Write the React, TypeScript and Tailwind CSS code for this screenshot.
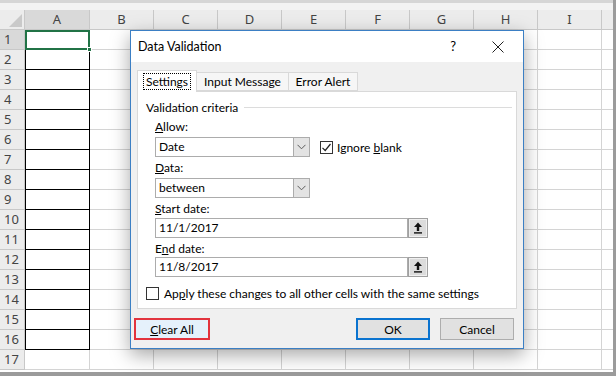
import React from 'react'

const COLS = ['A', 'B', 'C', 'D', 'E', 'F', 'G', 'H', 'I']
const ROWS = Array.from({ length: 17 }, (_, i) => i + 1)

const dlgFont = { fontFamily: 'Lato, "Noto Sans", "Liberation Sans", sans-serif' }

function Chevron() {
  return (
    <svg width="9" height="6" viewBox="0 0 9 6" className="block">
      <path d="M0.5 0.8 L4.5 4.8 L8.5 0.8" fill="none" stroke="#5a5a5a" strokeWidth="1" />
    </svg>
  )
}

function RefIcon() {
  return (
    <svg width="10" height="12" viewBox="0 0 10 12" className="block">
      <path d="M5 0.5 L9 5 L6.2 5 L6.2 9 L3.8 9 L3.8 5 L1 5 Z" fill="#111" />
      <rect x="1" y="10.2" width="8" height="1.4" fill="#111" />
    </svg>
  )
}

function CheckBox({ checked }: { checked?: boolean }) {
  return (
    <span className="flex h-[13px] w-[13px] items-center justify-center border border-[#333] bg-white">
      {checked && (
        <svg width="11" height="11" viewBox="0 0 11 11">
          <path d="M1.5 5.8 L4.2 8.5 L9.5 2" fill="none" stroke="#222" strokeWidth="1.2" />
        </svg>
      )}
    </span>
  )
}

function Select({ value }: { value: string }) {
  return (
    <div className="flex h-[20px] w-[155px] border border-[#acacac] bg-white">
      <span className="flex-1 pl-[3px] leading-[18px]">{value}</span>
      <span className="flex w-[16px] items-center justify-center border-l border-[#acacac] bg-[#e3e3e3]">
        <Chevron />
      </span>
    </div>
  )
}

function RefInput({ value }: { value: string }) {
  return (
    <div className="flex h-[20px] w-[273px]">
      <span className="flex-1 border border-[#acacac] bg-white pl-[3px] leading-[18px]">{value}</span>
      <span className="flex w-[20px] items-center justify-center border border-[#a0a0a0] bg-[#dcdcdc] shadow-[inset_0_0_0_1px_#f0f0f0]">
        <RefIcon />
      </span>
    </div>
  )
}

function Label({ children }: { children: React.ReactNode }) {
  return <div className="mt-[2px] h-[17px] leading-[17px]">{children}</div>
}

function Sheet() {
  return (
    <div className="h-[372px] w-[613px] bg-white" style={{ fontFamily: '"Noto Sans", "Liberation Sans", sans-serif' }}>
      <div className="h-[10px] border-t-[3px] border-[#d6d6d6] bg-[#f3f3f3]" />
      <div className="grid grid-cols-[25px_65px_repeat(8,64px)_1fr] grid-rows-[20px_repeat(17,20px)] text-[13px] text-[#444]">
        <div className="flex items-end justify-end border-r border-b border-[#c8c8c8] bg-[#ececec] pr-[2px] pb-[2px]">
          <svg width="13" height="13" viewBox="0 0 13 13">
            <path d="M13 0 L13 13 L0 13 Z" fill="#c9c9c9" />
          </svg>
        </div>
        {COLS.map((c) => (
          <div
            key={c}
            className={`flex items-center justify-center border-r border-b border-[#c8c8c8] ${c === 'A' ? 'bg-[#d9d9d9]' : 'bg-[#ececec]'}`}
          >
            {c}
          </div>
        ))}
        <div className="border-b border-[#c8c8c8] bg-[#ececec]" />
        {ROWS.map((r) => (
          <React.Fragment key={r}>
            <div
              className={`flex items-center pl-[4px] border-r border-b border-[#c8c8c8] ${r === 1 ? 'bg-[#d9d9d9]' : 'bg-[#ececec]'}`}
            >
              {r}
            </div>
            {r === 1 ? (
              <div className="relative border-2 border-[#217346]">
                <span className="absolute -right-[4px] -bottom-[4px] h-[5px] w-[5px] border border-white bg-[#217346]" />
              </div>
            ) : r <= 16 ? (
              <div className="border-x border-b border-black" />
            ) : (
              <div className="border-r border-b border-[#d4d4d4]" />
            )}
            {COLS.slice(1).map((c) => (
              <div key={c} className="border-r border-b border-[#d4d4d4]" />
            ))}
            <div className="border-b border-[#d4d4d4]" />
          </React.Fragment>
        ))}
      </div>
    </div>
  )
}

function Dialog() {
  return (
    <div
      className="absolute left-[130px] top-[30px] flex h-[319px] w-[394px] flex-col border border-[#3b7fc4] bg-[#f0f0f0] text-[12px] leading-[17px] text-black shadow-[0_6px_18px_rgba(0,0,0,0.35)]"
      style={dlgFont}
    >
      {/* Title bar */}
      <div className="flex h-[31px] items-center bg-white pl-[7px]">
        <span className="flex-1 text-[12.5px]">Data Validation</span>
        <span className="mr-[36px] text-[13px]">?</span>
        <svg width="12" height="12" viewBox="0 0 12 12" className="mr-[19px]">
          <path d="M0.5 0.5 L11.5 11.5 M11.5 0.5 L0.5 11.5" stroke="#222" strokeWidth="1" />
        </svg>
      </div>

      {/* Tabs */}
      <div className="mt-[8px] flex h-[21px] items-end pl-[6px]">
        <div className="relative z-10 -mb-px flex h-[22px] w-[60px] items-center justify-center border border-b-0 border-[#d9d9d9] bg-white">
          <span className="border border-dotted border-black px-[2px] leading-[15px]">Settings</span>
        </div>
        <div className="flex h-[19px] w-[92px] items-center justify-center border border-l-0 border-[#d9d9d9] bg-[#f6f6f6]">
          Input Message
        </div>
        <div className="flex h-[19px] w-[69px] items-center justify-center border border-l-0 border-[#d9d9d9] bg-[#f6f6f6]">
          Error Alert
        </div>
      </div>

      {/* Panel */}
      <div className="mx-[6px] flex h-[218px] flex-col border border-[#d9d9d9] bg-white pl-[8px] pr-[4px]">
        <div className="mt-[7px] flex h-[17px] items-center gap-[6px]">
          <span>Validation criteria</span>
          <span className="h-px flex-1 bg-[#dcdcdc]" />
        </div>
        <div className="pl-[9px]">
          <Label>
            <u>A</u>llow:
          </Label>
          <div className="mt-[2px] flex items-center">
            <Select value="Date" />
            <span className="ml-[10px]">
              <CheckBox checked />
            </span>
            <span className="ml-[4px]">
              Ignore <u>b</u>lank
            </span>
          </div>
          <Label>
            <u>D</u>ata:
          </Label>
          <div className="mt-[2px]">
            <Select value="between" />
          </div>
          <Label>
            <u>S</u>tart date:
          </Label>
          <div className="mt-[1px]">
            <RefInput value="11/1/2017" />
          </div>
          <Label>
            E<u>n</u>d date:
          </Label>
          <RefInput value="11/8/2017" />
        </div>
        <div className="mt-[10px] flex h-[13px] items-center">
          <CheckBox />
          <span className="ml-[5px]">
            Ap<u>p</u>ly these changes to all other cells with the same settings
          </span>
        </div>
      </div>

      {/* Buttons */}
      <div className="mt-[9px] flex items-center pl-[3px] pr-[9px]">
        <div className="flex h-[22px] w-[76px] items-center justify-center border-2 border-[#e2333d] bg-[#e5f1fb]">
          <span>
            <u>C</u>lear All
          </span>
        </div>
        <div className="flex-1" />
        <div className="flex h-[22px] w-[74px] items-center justify-center border-2 border-[#0a73cf] bg-[#e1e1e1]">
          OK
        </div>
        <div className="ml-[10px] flex h-[22px] w-[74px] items-center justify-center border border-[#adadad] bg-[#e1e1e1]">
          Cancel
        </div>
      </div>
    </div>
  )
}

export default function App() {
  return (
    <div className="relative h-[376px] w-[616px] overflow-hidden bg-[#9b9b9b]">
      <Sheet />
      <Dialog />
    </div>
  )
}
